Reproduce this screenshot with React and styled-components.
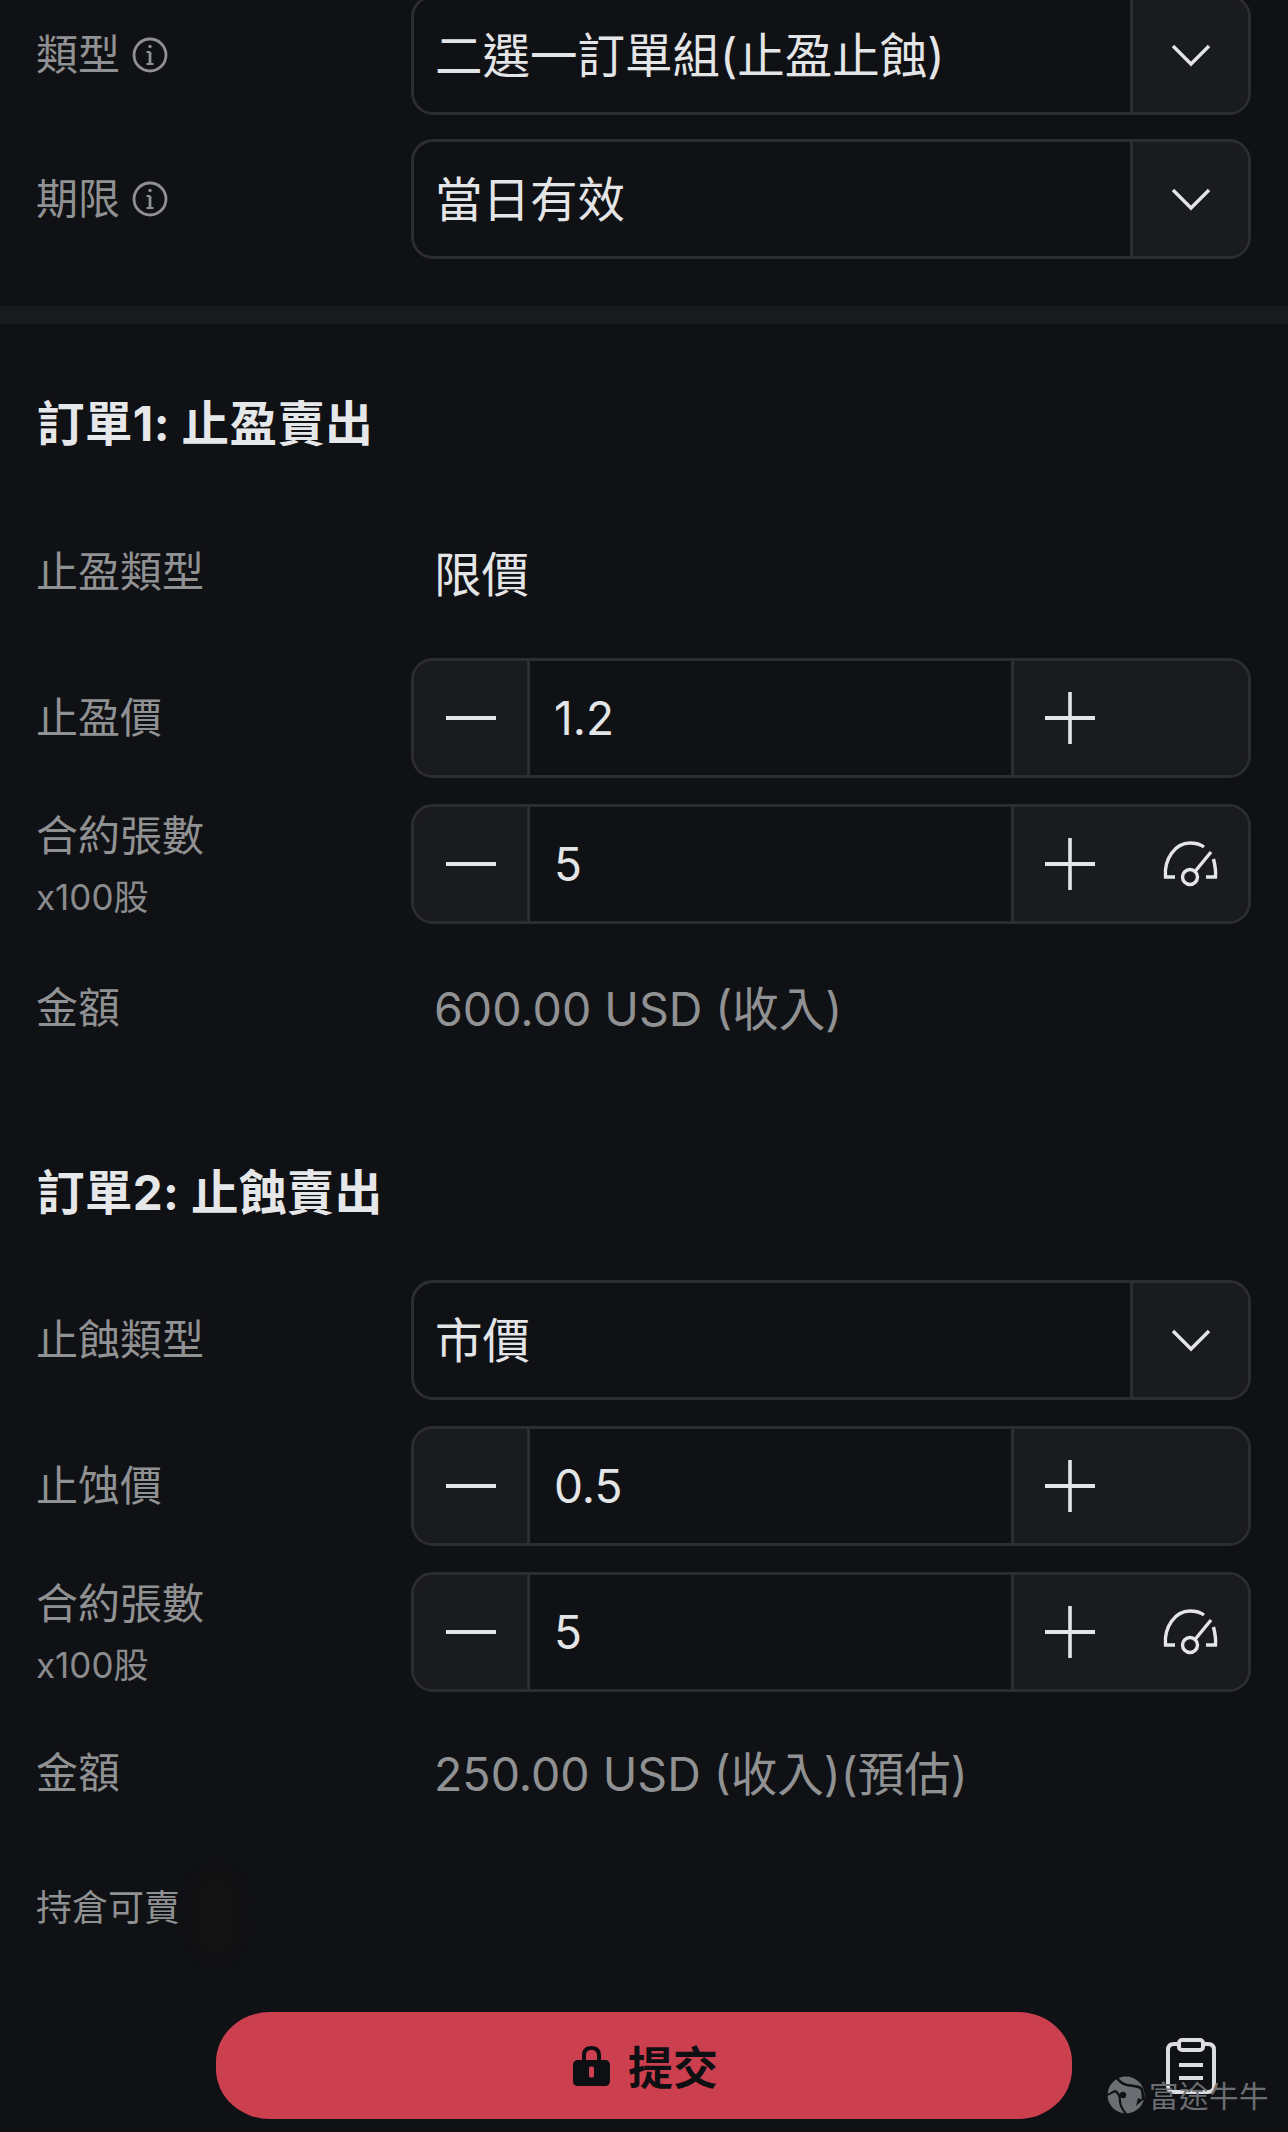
import React from "react";
import styled, { createGlobalStyle } from "styled-components";

const Global = createGlobalStyle`
  html, body { margin: 0; padding: 0; background: #101114; }
  * { box-sizing: border-box; }
  body { font-family: Inter, "Noto Sans CJK TC", "Noto Sans CJK SC", sans-serif; }
`;

const Page = styled.div`
  position: relative;
  width: 1288px;
  height: 2132px;
  overflow: hidden;
  background: #101114;
`;
const TopSection = styled.section`
  display: flex;
  flex-direction: column;
  gap: 24px;
  margin-top: -5px;
  padding: 0 37px 47px;
`;
const Band = styled.div`
  height: 18px;
  background: #191a1d;
`;
const Section = styled.section`
  display: flex;
  flex-direction: column;
  padding: 0 37px;
  margin-top: ${(p) => p.$top}px;
`;
const Title = styled.h2`
  margin: 0 0 ${(p) => p.$after}px;
  height: 56px;
  line-height: 56px;
  font-size: 47.5px;
  font-weight: 700;
  color: #e6e7e9;
  letter-spacing: 0.4px;
`;
const Row = styled.div`
  display: flex;
  align-items: center;
  height: 120px;
  margin-bottom: ${(p) => p.$gap ?? 26}px;
`;
const Label = styled.div`
  flex: 0 0 374px;
  display: flex;
  flex-direction: column;
  gap: ${(p) => p.$stack ? 13 : 0}px;
  margin-left: -1px;
  margin-right: 1px;
  color: #909193;
  font-size: ${(p) => p.$size ?? 42}px;
  line-height: 52px;
`;
const InlineLabel = styled.div`
  display: flex;
  align-items: center;
  gap: 12px;
`;
const SubLabel = styled.div`
  font-size: 35px;
  line-height: 44px;
  color: #8a8b8e;
`;
const PlainValue = styled.div`
  padding: 0 0 ${(p) => p.$muted ? 6 : 2}px 23px;
  font-size: ${(p) => p.$muted ? 46.5 : 47.5}px;
  color: ${(p) => p.$muted ? "#909193" : "#e4e5e7"};
`;
const Box = styled.div`
  flex: 1;
  height: 120px;
  display: flex;
  align-items: stretch;
  border: 3px solid #2b2d31;
  border-radius: 22px;
  overflow: hidden;
  background: #101114;
`;
const Field = styled.div`
  flex: 1;
  display: flex;
  align-items: center;
  padding-left: ${(p) => p.$cjk ? 21 : 24}px;
  padding-bottom: ${(p) => p.$cjk ? 5 : 0}px;
  font-size: ${(p) => p.$cjk ? 47.5 : 46}px;
  color: #e4e5e7;
`;
const Cap = styled.div`
  flex: 0 0 ${(p) => p.$w}px;
  display: flex;
  align-items: center;
  justify-content: ${(p) => p.$between ? "flex-start" : "center"};
  background: #1a1b1e;
  ${(p) => p.$side === "left" ? "border-left: 3px solid #2b2d31;" : "border-right: 3px solid #2b2d31;"}
  color: #e4e5e7;
`;
const PlusWrap = styled.div`
  display: flex;
  width: 100%;
  align-items: center;
  padding-left: 31px;
  gap: 67px;
`;
const Smudge = styled.div`
  position: absolute;
  left: 190px;
  top: 1870px;
  width: 52px;
  height: 88px;
  border-radius: 50%;
  background: #131314;
  filter: blur(6px);
`;
const Footer = styled.div`
  position: absolute;
  left: 0;
  right: 0;
  bottom: 13px;
  display: flex;
  align-items: center;
  padding-left: 216px;
  gap: 94px;
`;
const Submit = styled.button`
  width: 856px;
  height: 107px;
  border: 0;
  border-radius: 54px / 50px;
  background: #cc3f4e;
  color: #0e0f12;
  font: 700 45px Inter, "Noto Sans CJK TC", sans-serif;
  display: flex;
  align-items: center;
  justify-content: center;
  gap: 18px;
  padding: 0 0 0 3px;
`;
const Watermark = styled.div`
  position: absolute;
  left: 1107px;
  top: 2076px;
  display: flex;
  align-items: center;
  gap: 4px;
  color: #6b6e72;
  font-size: 29.5px;
  line-height: 36px;
`;
const WaterText = styled.span`
  letter-spacing: 0.5px;
  margin-top: 2px;
`;

const Chevron = () => (
  <svg width="40" height="24" viewBox="0 0 40 24" fill="none" stroke="#e4e5e7" strokeWidth="3.4">
    <path d="M2 3 L20 21 L38 3" />
  </svg>
);
const Minus = () => (
  <svg width="50" height="6" viewBox="0 0 50 6"><rect width="50" height="4" y="1" fill="#e4e5e7" /></svg>
);
const Plus = () => (
  <svg width="50" height="52" viewBox="0 0 50 52" fill="#e4e5e7">
    <rect x="0" y="24" width="50" height="4" />
    <rect x="23.2" y="0" width="3.6" height="52" />
  </svg>
);
const Gauge = () => (
  <svg width="58" height="46" viewBox="0 0 58 46" fill="none" stroke="#e4e5e7" strokeWidth="3.4">
    <path d="M13 36 H3.5 C2 18 13 2 28 2 C33 2 38 3 42 6" />
    <path d="M51.5 18 C53 24 54 30 53.5 36 H44" />
    <path d="M33 30.5 L49 11" />
    <circle cx="28" cy="36" r="7.5" />
  </svg>
);
const Info = () => (
  <svg width="36" height="36" viewBox="0 0 36 36" fill="none" stroke="#909193" strokeWidth="2.8">
    <circle cx="18" cy="18" r="16" />
    <path d="M18 15 V27" />
    <path d="M14.5 15 H18 M14.5 27 H21.5" strokeWidth="2.2" />
    <circle cx="18" cy="9.5" r="1.7" fill="#909193" stroke="none" />
  </svg>
);
const Lock = () => (
  <svg width="37" height="41" viewBox="0 0 37 41">
    <path fill="#0e0f12" fillRule="evenodd" d="M9 15 V10 C9 4 13 1 18.5 1 C24 1 28 4 28 10 V15 H32 C35 15 37 17 37 20 V36 C37 39 35 41 32 41 H5 C2 41 0 39 0 36 V20 C0 17 2 15 5 15 Z M13 15 H24 V10 C24 7 22 5 18.5 5 C15 5 13 7 13 10 Z M16 23 C16 21 21 21 21 23 V31 C21 33 16 33 16 31 Z" />
  </svg>
);
const Clipboard = () => (
  <svg width="50" height="56" viewBox="0 0 50 56" fill="none" stroke="#dcdde0" strokeWidth="4">
    <path d="M13 6 H8 C4 6 2 8 2 12 V48 C2 52 4 54 8 54 H42 C46 54 48 52 48 48 V12 C48 8 46 6 42 6 H37" />
    <rect x="13" y="2" width="24" height="10" rx="3" />
    <path d="M13 27 H37 M13 40 H37" />
  </svg>
);
const Logo = () => (
  <svg width="38" height="38" viewBox="0 0 38 38">
    <circle cx="19" cy="19" r="18.5" fill="#6b6e72" />
    <path d="M9 0 C11 4 15 8 20 9 C27 10 34 10 35 14 C36 17 36 20 36 24" fill="none" stroke="#101114" strokeWidth="2.6" />
    <path d="M0 19 C3 18 6 16 8 15 C12 17 13 21 13 25 C13 29 15 33 19 38" fill="none" stroke="#101114" strokeWidth="2.2" />
    <path d="M36 24 L29 30 L31 22 Z" fill="#101114" />
    <circle cx="16" cy="19" r="3.2" fill="#101114" />
  </svg>
);

const Select = ({ value }) => (
  <Box>
    <Field $cjk>{value}</Field>
    <Cap $w={118} $side="left"><Chevron /></Cap>
  </Box>
);
const Stepper = ({ value, gauge }) => (
  <Box>
    <Cap $w={116} $side="right"><Minus /></Cap>
    <Field>{value}</Field>
    <Cap $w={237} $side="left" $between>
      <PlusWrap><Plus />{gauge && <Gauge />}</PlusWrap>
    </Cap>
  </Box>
);
const ContractLabel = () => (
  <Label $stack>
    合約張數
    <SubLabel>x100股</SubLabel>
  </Label>
);

export default function App() {
  return (
    <Page>
      <Global />
      <TopSection>
        <Row $gap={0}>
          <Label><InlineLabel>類型<Info /></InlineLabel></Label>
          <Select value="二選一訂單組(止盈止蝕)" />
        </Row>
        <Row $gap={0}>
          <Label><InlineLabel>期限<Info /></InlineLabel></Label>
          <Select value="當日有效" />
        </Row>
      </TopSection>
      <Band />
      <Section $top={72}>
        <Title $after={60}>訂單1: 止盈賣出</Title>
        <Row $gap={26}>
          <Label>止盈類型</Label>
          <PlainValue>限價</PlainValue>
        </Row>
        <Row>
          <Label>止盈價</Label>
          <Stepper value="1.2" />
        </Row>
        <Row $gap={24}>
          <ContractLabel />
          <Stepper value="5" gauge />
        </Row>
        <Row $gap={0}>
          <Label>金額</Label>
          <PlainValue $muted>600.00 USD (收入)</PlainValue>
        </Row>
      </Section>
      <Section $top={97}>
        <Title $after={59}>訂單2: 止蝕賣出</Title>
        <Row>
          <Label>止蝕類型</Label>
          <Select value="市價" />
        </Row>
        <Row>
          <Label>止蚀價</Label>
          <Stepper value="0.5" />
        </Row>
        <Row $gap={21}>
          <ContractLabel />
          <Stepper value="5" gauge />
        </Row>
        <Row $gap={15}>
          <Label>金額</Label>
          <PlainValue $muted>250.00 USD (收入)(預估)</PlainValue>
        </Row>
        <Row $gap={0}>
          <Label $size={36}>持倉可賣</Label>
        </Row>
      </Section>
      <Smudge />
      <Footer>
        <Submit><Lock />提交</Submit>
        <Clipboard />
      </Footer>
      <Watermark><Logo /><WaterText>富途牛牛</WaterText></Watermark>
    </Page>
  );
}
